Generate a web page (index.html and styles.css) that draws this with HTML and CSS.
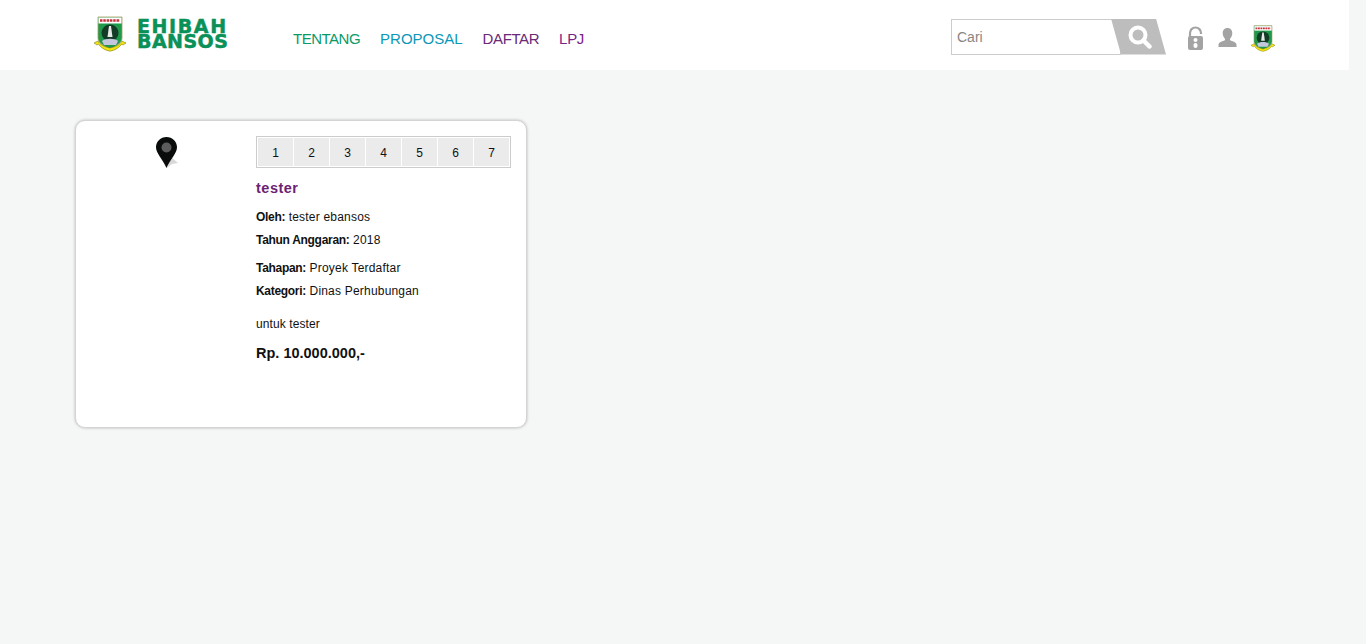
FILE: index.html
```html
<!DOCTYPE html>
<html lang="en">
<head>
  <meta charset="UTF-8" />
  <meta name="viewport" content="width=device-width, initial-scale=1.0"/>
  <title>Ehibah Bansos</title>
  <link rel="stylesheet" href="styles.css">
</head>
<body>

  <!-- Shared emblem -->
  <svg class="defs" width="0" height="0">
    <symbol id="emblem" viewBox="0 0 32 36">
      <path d="M4 1h24v21c0 5-6 8-12 11C10 30 4 27 4 22z" fill="#1f9a4c" stroke="#a89a60" stroke-width=".8"/>
      <rect x="4.500" y="1.500" width="23" height="6" fill="#fff"/>
      <path d="M6 4.500h20" stroke="#c8323c" stroke-width="2.400" stroke-dasharray="2.500 .8"/>
      <circle cx="16" cy="17" r="8.500" fill="#123c26"/>
      <path d="M15 10h2l1.500 11h-5z" fill="#e8e8e8"/>
      <path d="M8 25c3-3 13-3 16 0l-2 4H10z" fill="#c4c6de"/>
      <path d="M0 27l4-2c2 4 7 6 12 7 5-1 10-3 12-7l4 2-3 2-1.500-.8c-2 3-6 6-11.500 7-5.500-1-9.500-4-11.500-7L3 29z" fill="#f5e60f" stroke="#66660f" stroke-width=".5"/>
    </symbol>
  </svg>

  <div class="page">
    <!-- Top bar -->
    <header class="topbar">
      <a class="brand" href="#">
        <svg class="brand-emblem"><use href="#emblem"/></svg>
        <span class="brand-text">
          <span class="brand-top">EHIBAH</span>
          <span class="brand-bottom">BANSOS</span>
        </span>
      </a>

      <nav class="menu">
        <a class="menu-green" href="#">TENTANG</a>
        <a class="menu-blue" href="#">PROPOSAL</a>
        <a class="menu-purple" href="#">DAFTAR</a>
        <a class="menu-violet" href="#">LPJ</a>
      </nav>

      <form class="search">
        <input type="text" placeholder="Cari" />
        <button type="button" aria-label="Cari">
          <svg width="24" height="24" viewBox="0 0 24 24">
            <circle cx="10" cy="10" r="7.500" fill="none" stroke="#fff" stroke-width="4"/>
            <path d="M15.500 15.500l6 6" stroke="#fff" stroke-width="4.500" stroke-linecap="round"/>
          </svg>
        </button>
      </form>

      <div class="tools">
        <svg class="icon-lock" width="17" height="24" viewBox="0 0 17 24">
          <path d="M3 11V7a5.500 5.500 0 0 1 11 0v1" fill="none" stroke="#a3a3a3" stroke-width="2.200"/>
          <path d="M1 12a2 2 0 0 1 2-2h11a2 2 0 0 1 2 2v10a2 2 0 0 1-2 2H3a2 2 0 0 1-2-2z" fill="#a3a3a3"/>
          <circle cx="8.500" cy="14" r="2" fill="#fff"/>
          <rect x="6.500" y="17" width="4" height="5" rx="2" fill="#fff"/>
        </svg>
        <svg class="icon-user" width="19" height="19" viewBox="0 0 19 19">
          <path d="M9.500 0c3 0 4.800 2.200 4.800 5.200 0 2.500-1.200 4.500-2.300 5.600v1.400c1.800 1 6.500 1.700 6.500 4.300V19H.5v-2.500c0-2.600 4.700-3.300 6.500-4.300v-1.400C5.900 9.700 4.700 7.700 4.700 5.200 4.700 2.200 6.500 0 9.500 0z" fill="#a3a3a3"/>
        </svg>
        <svg class="tools-emblem"><use href="#emblem"/></svg>
      </div>
    </header>

    <!-- Project card -->
    <main class="content">
      <article class="card">
        <div class="card-map">
          <svg width="23" height="31" viewBox="0 0 23 31">
            <path d="M11 31l4-11 7 6-6 1z" fill="#d9d9d9"/>
            <path d="M10.500 0C4.700 0 0 4.600 0 10.300c0 6 6.500 11.500 10.500 20.700C14.500 21.800 21 16.300 21 10.300 21 4.600 16.300 0 10.500 0z" fill="#0a0c0c"/>
            <circle cx="10.500" cy="10.500" r="5" fill="#5c5c5c"/>
          </svg>
        </div>

        <div class="card-body">
          <ul class="steps">
            <li>1</li>
            <li>2</li>
            <li>3</li>
            <li>4</li>
            <li>5</li>
            <li>6</li>
            <li>7</li>
          </ul>

          <h3 class="title">tester</h3>

          <div class="meta">
            <p><b>Oleh:</b> tester ebansos</p>
            <p><b>Tahun Anggaran:</b> 2018</p>
          </div>
          <div class="meta">
            <p><b>Tahapan:</b> Proyek Terdaftar</p>
            <p><b>Kategori:</b> Dinas Perhubungan</p>
          </div>

          <p class="desc">untuk tester</p>
          <p class="price">Rp. 10.000.000,-</p>
        </div>
      </article>
    </main>
  </div>

</body>
</html>
```

FILE: styles.css
```css
* {
  box-sizing: border-box;
}

body {
  margin: 0;
  min-height: 644px;
  background: #f5f7f6;
  font-family: "Liberation Sans", Arial, sans-serif;
  color: #111;
}

a {
  text-decoration: none;
}

.defs {
  display: block;
  height: 0;
}

.page {
  width: 1349px;
}

/* Top bar */
.topbar {
  display: flex;
  align-items: center;
  height: 70px;
  padding-left: 94px;
  background: #fff;
}

.brand {
  display: flex;
  align-items: center;
  width: 199px;
}

.brand-emblem {
  width: 32px;
  height: 36px;
  margin-top: -2px;
}

.brand-text {
  display: block;
  margin-left: 11px;
  margin-top: -2px;
  font-family: "DejaVu Sans", sans-serif;
  font-size: 19px;
  font-weight: bold;
  line-height: 15.500px;
  color: #0a9158;
  -webkit-text-stroke: 0.5px #0a9158;
}

.brand-top {
  display: block;
  letter-spacing: 1.600px;
}

.brand-bottom {
  display: block;
  letter-spacing: 0.450px;
}

.menu {
  display: flex;
  gap: 20px;
  padding-top: 6px;
  font-size: 15px;
}

.menu-green { color: #0a9a68; letter-spacing: -0.500px; }
.menu-blue { color: #0b98b8; }
.menu-purple { color: #6b2a78; letter-spacing: -0.400px; }
.menu-violet { color: #7a2488; letter-spacing: -0.300px; }

.search {
  display: flex;
  width: 215px;
  height: 36px;
  margin-left: auto;
  margin-top: 3px;
}

.search input {
  width: 170px;
  height: 36px;
  padding: 0 5px;
  border: 1px solid #ccc;
  font-family: inherit;
  font-size: 14px;
  outline: none;
}

.search input::placeholder {
  color: #8a8583;
  opacity: 1;
}

.search button {
  display: flex;
  align-items: center;
  justify-content: center;
  width: 55px;
  height: 36px;
  margin-left: -10px;
  padding: 0 0 0 3px;
  border: none;
  background: #bdbdbd;
  clip-path: polygon(0 0, 45px 0, 55px 100%, 10px 100%);
}

.tools {
  display: flex;
  align-items: center;
  gap: 14px;
  margin-left: 21px;
  margin-right: 74px;
  padding-top: 6px;
}

.icon-lock {
  margin-top: -1px;
}

.icon-user {
  margin-top: -1px;
}

.tools-emblem {
  width: 24px;
  height: 27px;
}

/* Card */
.content {
  padding: 50px 0 0 75px;
}

.card {
  display: flex;
  width: 452px;
  height: 308px;
  border: 1px solid #d4d4d4;
  border-radius: 10px;
  background: #fff;
  box-shadow: 0 0 3px rgba(0, 0, 0, 0.25);
}

.card-map {
  width: 180px;
  padding: 16px 0 0 80px;
}

.card-map svg {
  display: block;
}

.card-body {
  width: 255px;
  padding-top: 15px;
  font-size: 12px;
  letter-spacing: 0.200px;
}

.card-body b {
  letter-spacing: -0.300px;
}

.steps {
  display: flex;
  height: 32px;
  margin: 0;
  padding: 1px;
  border: 1px solid #ccc;
  list-style: none;
  letter-spacing: 0;
}

.steps li {
  flex: 1;
  background: #ebebeb;
  border-right: 1px solid #fff;
  font-size: 12px;
  line-height: 30px;
  text-align: center;
}

.steps li:last-child {
  border-right: none;
}

.title {
  margin: 11px 0 9px;
  font-size: 14.500px;
  line-height: 18px;
  letter-spacing: 0.500px;
  color: #6b2272;
}

.meta {
  margin-bottom: 5px;
}

.meta p {
  margin: 0;
  line-height: 23px;
}

.desc {
  margin: 10px 0 0;
  line-height: 23px;
  letter-spacing: 0.100px;
}

.price {
  margin: 8px 0 0;
  font-size: 14.500px;
  font-weight: bold;
  line-height: 18px;
  letter-spacing: 0;
}
```
